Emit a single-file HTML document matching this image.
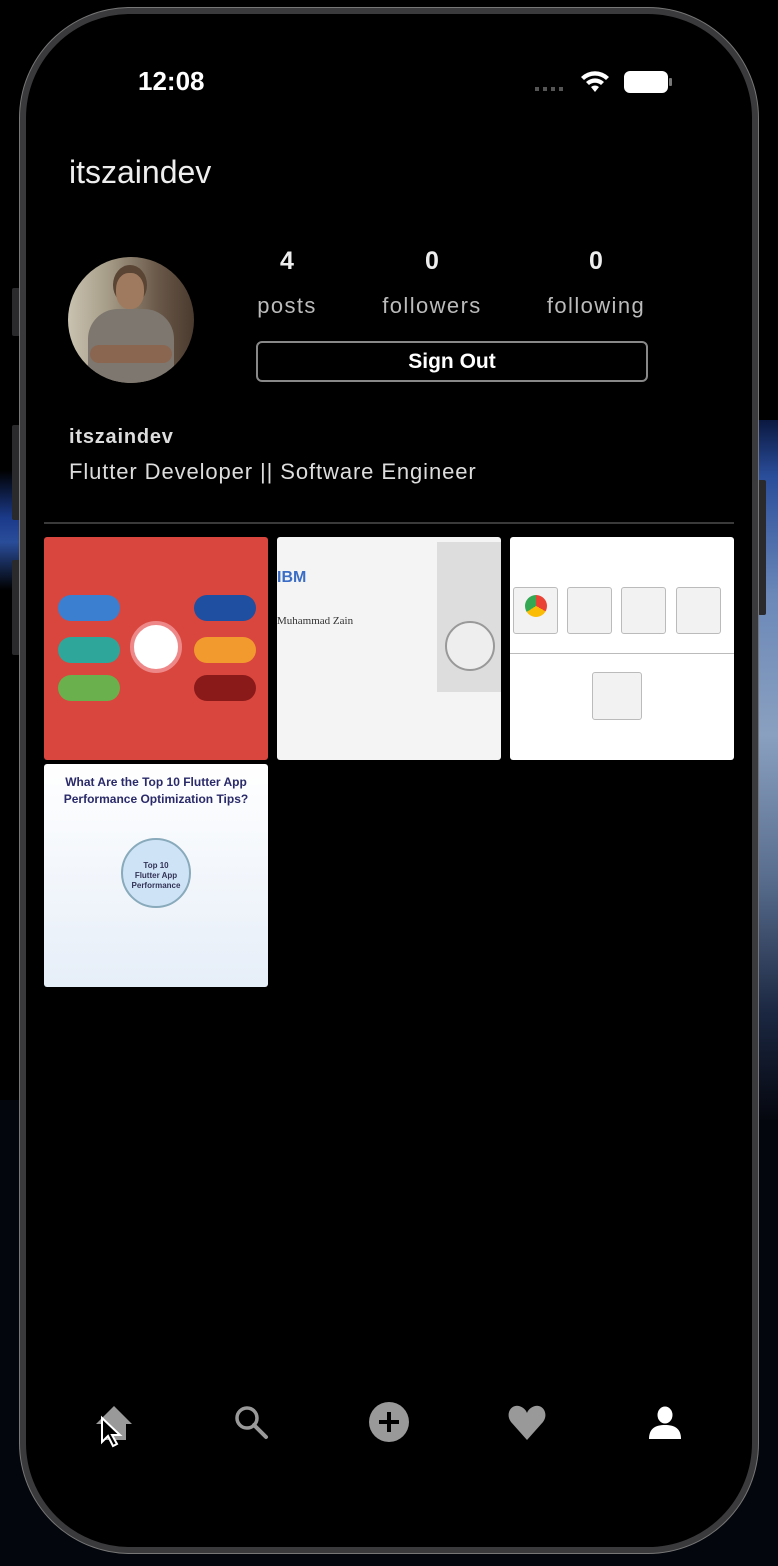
<!DOCTYPE html>
<html><head><meta charset="utf-8"><style>
*{margin:0;padding:0;box-sizing:border-box}
body{width:778px;height:1566px;background:#000;position:relative;overflow:hidden;font-family:"Liberation Sans",sans-serif;color:#fff}
.abs{position:absolute}
.earthR{left:735px;top:420px;width:43px;height:700px;background:linear-gradient(180deg,#0a1840 0%,#2a4d9a 8%,#6b88b8 25%,#8aa0c0 45%,#5a6f90 65%,#1a2640 85%,#05070f 100%)}
.earthL{left:0;top:470px;width:24px;height:120px;background:linear-gradient(180deg,#000,#1b3a8a 40%,#2a4d9a 60%,#000)}
.bottombg{left:0;top:1100px;width:778px;height:466px;background:#04060d}
.phone{left:20px;top:8px;width:738px;height:1545px;border-radius:110px;background:#000;border:6px solid #3a3a3c;box-shadow:0 0 0 1px #777}
.btn{background:#2a2a2c;border-radius:2px}
.stat{position:absolute;text-align:center;width:160px}
.num{font-size:25px;font-weight:bold;color:#eee}
.lab{font-size:22px;color:#bbb;margin-top:17px;letter-spacing:1.4px}
.tile{position:absolute;width:224px;height:223px;border-radius:3px;overflow:hidden}
</style></head><body>
<div class="abs bottombg"></div>
<div class="abs earthR"></div>
<div class="abs earthL"></div>
<div class="abs btn" style="left:12px;top:288px;width:8px;height:48px"></div>
<div class="abs btn" style="left:12px;top:425px;width:8px;height:95px"></div>
<div class="abs btn" style="left:12px;top:560px;width:8px;height:95px"></div>
<div class="abs btn" style="left:758px;top:480px;width:8px;height:135px"></div>
<div class="abs phone"></div>

<div class="abs" style="left:138px;top:66px;font-size:26px;font-weight:bold;color:#fff">12:08</div>
<div class="abs" style="left:535px;top:87px;width:32px;height:4px;background:repeating-linear-gradient(90deg,#555 0 4px,transparent 4px 8px)"></div>
<svg class="abs" style="left:580px;top:70px" width="30" height="24" viewBox="0 0 30 24"><path d="M15 22 L11 17 A6 6 0 0 1 19 17Z M6 12 A13 13 0 0 1 24 12 L21 15 A9 9 0 0 0 9 15Z M1 7 A20 20 0 0 1 29 7 L26 10 A16 16 0 0 0 4 10Z" fill="#fff"/></svg>
<div class="abs" style="left:624px;top:71px;width:44px;height:22px;border-radius:6px;background:#fff"></div>
<div class="abs" style="left:669px;top:78px;width:3px;height:8px;background:#777;border-radius:1px"></div>

<div class="abs" style="left:69px;top:154px;font-size:32px;color:#eee">itszaindev</div>

<div class="abs" style="left:68px;top:257px;width:126px;height:126px;border-radius:50%;overflow:hidden;background:linear-gradient(90deg,#c9c2b0 0%,#a89f8a 30%,#6b5a4a 70%,#4a3a2e 100%)">
 <div class="abs" style="left:45px;top:8px;width:34px;height:40px;border-radius:50%;background:#5a4434"></div>
 <div class="abs" style="left:48px;top:16px;width:28px;height:36px;border-radius:45%;background:#a07a5e"></div>
 <div class="abs" style="left:20px;top:52px;width:86px;height:80px;border-radius:30px 30px 0 0;background:#7d776f"></div>
 <div class="abs" style="left:22px;top:88px;width:82px;height:18px;border-radius:9px;background:#8a6650"></div>
</div>

<div class="stat" style="left:207px;top:247px"><div class="num">4</div><div class="lab">posts</div></div>
<div class="stat" style="left:352px;top:247px"><div class="num">0</div><div class="lab">followers</div></div>
<div class="stat" style="left:516px;top:247px"><div class="num">0</div><div class="lab">following</div></div>

<div class="abs" style="left:256px;top:341px;width:392px;height:41px;border:2px solid #888;border-radius:6px;text-align:center;line-height:37px;font-size:21px;font-weight:bold">Sign Out</div>

<div class="abs" style="left:69px;top:426px;font-size:20px;font-weight:bold;color:#ddd;letter-spacing:.8px">itszaindev</div>
<div class="abs" style="left:69px;top:459px;font-size:22px;color:#ddd;letter-spacing:.9px">Flutter Developer || Software Engineer</div>
<div class="abs" style="left:44px;top:522px;width:690px;height:2px;background:#3a3a3a"></div>

<div class="tile" style="left:44px;top:537px;background:#d9463e">
 <div class="abs" style="left:86px;top:84px;width:52px;height:52px;border-radius:50%;background:#fff;border:4px solid #e88"></div>
 <div class="abs" style="left:14px;top:58px;width:62px;height:26px;border-radius:13px;background:#3a7fd0"></div>
 <div class="abs" style="left:14px;top:100px;width:62px;height:26px;border-radius:13px;background:#2ea79a"></div>
 <div class="abs" style="left:14px;top:138px;width:62px;height:26px;border-radius:13px;background:#6ab04c"></div>
 <div class="abs" style="left:150px;top:58px;width:62px;height:26px;border-radius:13px;background:#1e4fa0"></div>
 <div class="abs" style="left:150px;top:100px;width:62px;height:26px;border-radius:13px;background:#f29a2e"></div>
 <div class="abs" style="left:150px;top:138px;width:62px;height:26px;border-radius:13px;background:#8a1a1a"></div>
</div>
<div class="tile" style="left:277px;top:537px;background:#f4f4f4">
 <div class="abs" style="left:0;top:32px;font-size:16px;font-weight:bold;color:#3b6dc6">IBM</div>
 <div class="abs" style="left:0;top:78px;font-size:11px;font-family:'Liberation Serif',serif;color:#333">Muhammad Zain</div>
 <div class="abs" style="left:160px;top:5px;width:64px;height:150px;background:#ddd"></div>
 <div class="abs" style="left:168px;top:84px;width:50px;height:50px;border-radius:50%;border:2px solid #999;background:#eee"></div>
</div>
<div class="tile" style="left:510px;top:537px;background:#fff">
 <div class="abs" style="left:3px;top:50px;width:45px;height:47px;border:1px solid #bbb;border-radius:3px;background:#f2f2f2"></div>
 <div class="abs" style="left:57px;top:50px;width:45px;height:47px;border:1px solid #bbb;border-radius:3px;background:#f2f2f2"></div>
 <div class="abs" style="left:111px;top:50px;width:45px;height:47px;border:1px solid #bbb;border-radius:3px;background:#f2f2f2"></div>
 <div class="abs" style="left:166px;top:50px;width:45px;height:47px;border:1px solid #bbb;border-radius:3px;background:#f2f2f2"></div>
 <div class="abs" style="left:15px;top:58px;width:22px;height:22px;border-radius:50%;background:conic-gradient(#ea4335 0 33%,#fbbc05 0 66%,#34a853 0)"></div>
 <div class="abs" style="left:0;top:116px;width:224px;height:1px;background:#bbb"></div>
 <div class="abs" style="left:82px;top:135px;width:50px;height:48px;border:1px solid #bbb;border-radius:3px;background:#f2f2f2"></div>
</div>
<div class="tile" style="left:44px;top:764px;background:linear-gradient(#fff,#e6eef8)">
 <div class="abs" style="left:0;top:10px;width:224px;text-align:center;font-size:12px;font-weight:bold;color:#2a2a6a;line-height:17px">What Are the Top 10 Flutter App<br>Performance Optimization Tips?</div>
 <div class="abs" style="left:77px;top:74px;width:70px;height:70px;border-radius:50%;background:#cfe3f7;border:2px solid #8ab"></div>
 <div class="abs" style="left:0;top:97px;width:224px;text-align:center;font-size:8px;font-weight:bold;color:#335;line-height:10px">Top 10<br>Flutter App<br>Performance</div>
</div>

<svg class="abs" style="left:94px;top:1404px" width="40" height="44" viewBox="0 0 40 44"><path d="M20 2 L38 20 L32 20 L32 36 L8 36 L8 20 L2 20Z" fill="#999"/><path d="M8 14 L8 38 L14 32 L19 42 L23 40 L18 31 L26 31Z" fill="#000" stroke="#fff" stroke-width="2"/></svg>
<svg class="abs" style="left:232px;top:1404px" width="38" height="38" viewBox="0 0 38 38"><circle cx="15" cy="14" r="10" fill="none" stroke="#999" stroke-width="3.5"/><path d="M22 21 L34 33" stroke="#999" stroke-width="4" stroke-linecap="round"/></svg>
<svg class="abs" style="left:369px;top:1402px" width="40" height="40" viewBox="0 0 40 40"><ellipse cx="20" cy="20" rx="20" ry="20" fill="#999"/><path d="M20 10 V30 M10 20 H30" stroke="#000" stroke-width="4"/></svg>
<svg class="abs" style="left:507px;top:1404px" width="40" height="38" viewBox="0 0 40 38"><path d="M20 36 L4 18 C-2 10 4 0 12 2 C16 3 19 6 20 9 C21 6 24 3 28 2 C36 0 42 10 36 18Z" fill="#999"/></svg>
<svg class="abs" style="left:648px;top:1406px" width="34" height="34" viewBox="0 0 34 34"><ellipse cx="17" cy="9" rx="7.5" ry="8.5" fill="#fff"/><path d="M1 33 C1 22 8 19 17 19 C26 19 33 22 33 33Z" fill="#fff"/></svg>
</body></html>
